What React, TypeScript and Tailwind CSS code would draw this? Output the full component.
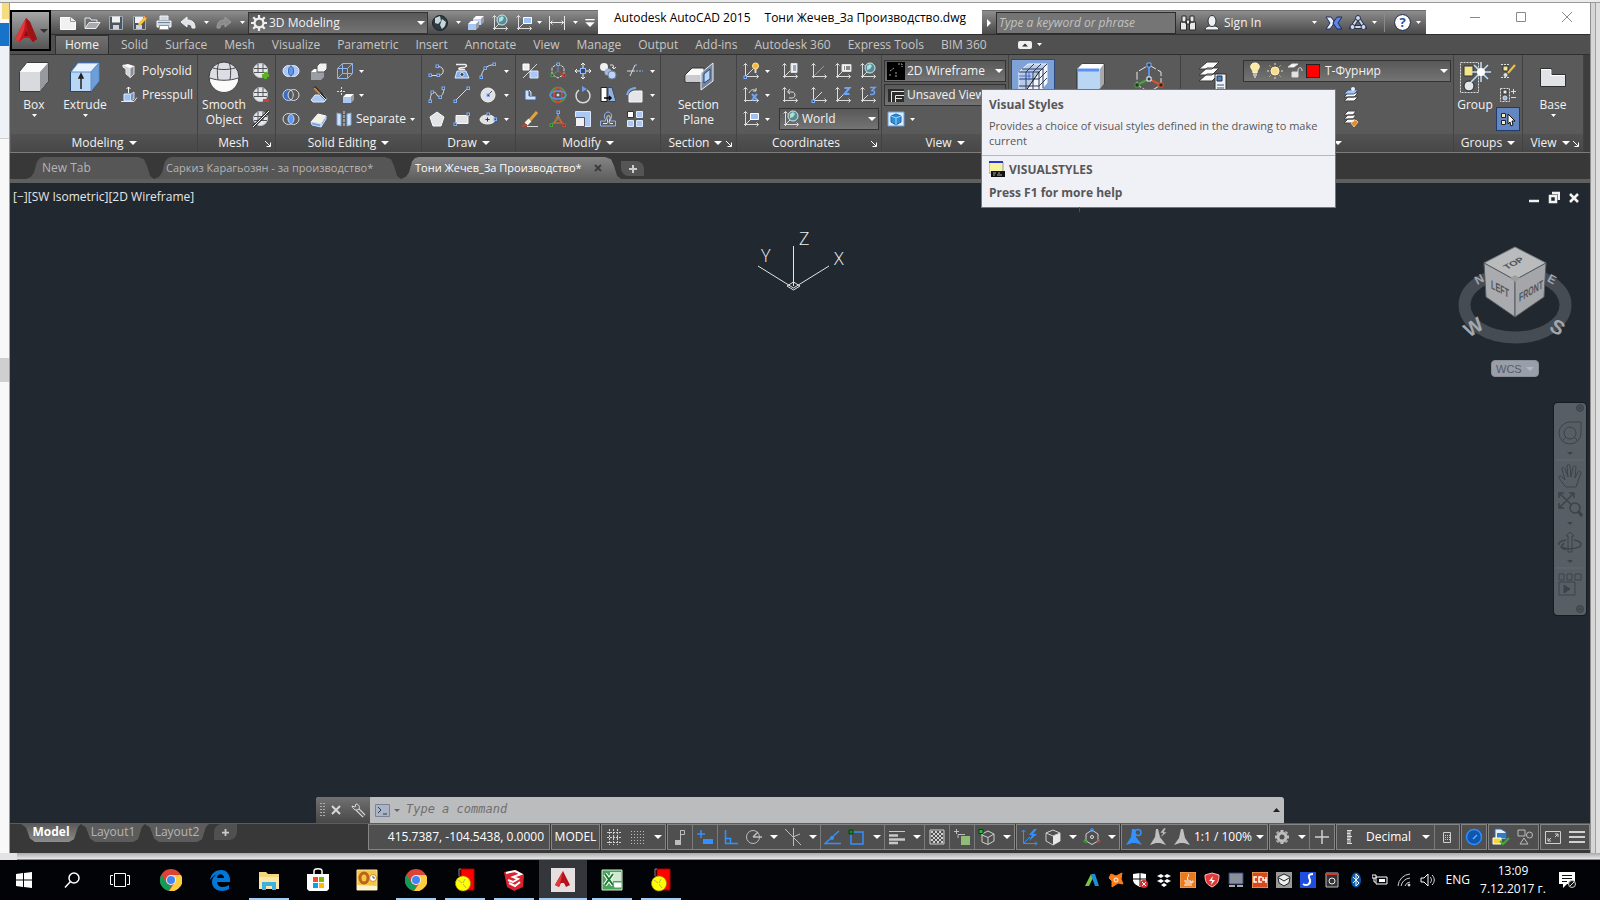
import type { ReactNode } from "react";
import clsx from "clsx";

/* ---------- drawing helpers ---------- */

function Svg({ s = 18, vb = 18, children }: { s?: number; vb?: number; children: ReactNode }) {
  return (
    <svg width={s} height={s} viewBox={`0 0 ${vb} ${vb}`} fill="none" stroke="#dcdcdc" className="shrink-0" aria-hidden="true">
      {children}
    </svg>
  );
}

function Caret({ big }: { big?: boolean }) {
  return big ? (
    <svg width="8" height="4" viewBox="0 0 8 4" className="shrink-0" aria-hidden="true">
      <path d="M0 0h8L4 4z" fill="#fff" />
    </svg>
  ) : (
    <svg width="5" height="3" viewBox="0 0 5 3" className="shrink-0" aria-hidden="true">
      <path d="M0 0h5L2.5 3z" fill="#fff" />
    </svg>
  );
}

function Axis({ children }: { children?: ReactNode }) {
  return (
    <Svg>
      <path d="M3.5 16V1.5M1.5 3.5l2-2 2 2M2 14.5h14.5M14.5 12.5l2 2-2 2" />
      {children}
    </Svg>
  );
}

const BLUE = "#8fb4ee";
const globe = (cx: number, cy: number, r: number) => (
  <>
    <circle cx={cx} cy={cy} r={r} fill="#4d8fa0" stroke="#d7e4ea" />
    <path d={`M${cx - 3} ${cy - 2}l3-2 2 2-2 3-3 1z`} fill="#b9dcc4" stroke="none" />
  </>
);
const meshSphere = (
  <>
    <circle cx="8.5" cy="8.5" r="7" fill="#e4e6ea" stroke="#c9cbd0" />
    <path d="M2 6.5h13M2 10.5h13M6 2v9M11 2v9" stroke="#55585f" />
  </>
);
const box = (x: number, y: number, w: number, front: string) => (
  <>
    <path d={`M${x} ${y + 3}l3-3h${w}l-3 3z`} fill="#fff" stroke="none" />
    <path d={`M${x} ${y + 3}h${w}v${w - 2}h-${w}z`} fill={front} stroke="none" />
    <path d={`M${x + w} ${y + 3}l3-3v${w - 2}l-3 3z`} fill="#9a9da3" stroke="none" />
  </>
);
const sq = (x: number, y: number, c = "#7fb0ff") => <rect x={x - 1} y={y - 1} width="2.5" height="2.5" stroke={c} fill="#3a4660" />;

const icons: Record<string, ReactNode> = {
  // quick access
  newFile: <Svg><path d="M1.5 3.5h10l5 4v8h-15z" fill="#f1f1f1" stroke="#fff" /><path d="M11.5 3.5v4h5" stroke="#999" /></Svg>,
  open: <Svg><path d="M2 14V4h5l1 2h6v2" stroke="#e8e8e8" /><path d="M2 14.5L6 8.5h11l-4 6z" fill="#a5a9b0" stroke="#eee" /></Svg>,
  save: <Svg><path d="M2.5 2.5h13v13h-13z" fill="#4c5661" stroke="#9fa9b3" /><path d="M5 2.5h8v6H5z" fill="#f0f0f0" stroke="none" /><path d="M6 11h6v4.5H6z" fill="#cdd3d8" stroke="none" /></Svg>,
  saveAs: <Svg><path d="M2.5 2.5h12v13h-12z" fill="#4c5661" stroke="#9fa9b3" /><path d="M4 3h8v6H4z" fill="#f0f0f0" stroke="none" /><path d="M5 11h6v4H5z" fill="#cdd3d8" stroke="none" /><path d="M8 11l7-8" stroke="#f5c33b" strokeWidth="3" /><path d="M14.5 3.5l1-1" stroke="#d9573c" strokeWidth="3" /></Svg>,
  print: <Svg><path d="M5 6V2h8v4M2 7h14v6H2z" fill="#cfd5dc" stroke="#f2f2f2" /><path d="M3 8.5h12" stroke="#6d86a8" /><path d="M4.5 11.5h9v4h-9z" fill="#fff" stroke="#8d96a0" /></Svg>,
  undo: <Svg><path d="M2 8l6-5v3c5 0 8 2 8 8h-3c0-3-2-4-5-4v3z" fill="#dfe3ea" stroke="#f2f2f2" /></Svg>,
  redo: <Svg><path d="M16 8l-6-5v3c-5 0-8 2-8 8h3c0-3 2-4 5-4v3z" fill="#8b8b8b" stroke="#9c9c9c" /></Svg>,
  gear: <Svg s={16}><circle cx="9" cy="9" r="5" strokeWidth="2.5" stroke="#f0f0f0" /><path d="M9 0v4M9 14v4M0 9h4M14 9h4M2.5 2.5l3 3M12.5 12.5l3 3M2.5 15.5l3-3M12.5 5.5l3-3" strokeWidth="2.5" stroke="#f0f0f0" /></Svg>,
  earth: <Svg><circle cx="9" cy="9" r="7.5" fill="#2d3b43" stroke="#1d2529" /><path d="M4 4l5-2 1 5-3 3-3-1zM11 5l4 3-1 4-3 3-2-4z" fill="#c9d6d9" stroke="none" /></Svg>,
  boxes: <Svg>{box(6, 2, 8, "#c3d8f8")}{box(1, 7, 8, "#a8c6f2")}</Svg>,
  axisGlobe: <Axis><path d="M4 14l4-4" />{globe(11, 6, 5)}</Axis>,
  axisView: <Axis><path d="M4 14l5-5" /><path d="M8.5 3.5h8v6h-8z" fill="#9fc0f4" stroke="#fff" /></Axis>,
  dim: <Svg><path d="M1.5 2v14M16.5 2v14M2 8.5h14M4.5 6.5l-2 2 2 2M13.5 6.5l2 2-2 2" stroke="#e8e8e8" /></Svg>,
  more: <Svg s={12}><path d="M2 4h14" stroke="#fff" strokeWidth="2" /><path d="M2 8h14l-7 7z" fill="#fff" stroke="none" /></Svg>,
  binoculars: <Svg><path d="M3 2h4v6H3zM11 2h4v6h-4zM1.5 8h6v8h-6zM10.5 8h6v8h-6zM7 6h4v4H7z" fill="#e8e8e8" stroke="#2b2b2b" /></Svg>,
  person: <Svg><path d="M2 16c0-3 3-4 5-4h4c2 0 5 1 5 4z" fill="#eef0f3" stroke="#2f3236" /><ellipse cx="9" cy="7" rx="4" ry="5.5" fill="#eef0f3" stroke="#2f3236" /></Svg>,
  exchange: <Svg><path d="M1 3h5l3 4-1 4-3 4H1l4-6z" fill="#e8eefb" stroke="#1d2c66" /><path d="M17 3h-5L8 9l4 6h5l-4-6z" fill="#5f86e6" stroke="#1d2c66" /></Svg>,
  a360: <Svg><path d="M9 4l6 9H3z" strokeWidth="4" stroke="#26314a" /><path d="M9 4l6 9H3z" strokeWidth="2" stroke="#cdd8ee" /><circle cx="9" cy="4" r="2.5" fill="#cdd8ee" stroke="#26314a" /><circle cx="3.5" cy="13" r="2.5" fill="#cdd8ee" stroke="#26314a" /><circle cx="14.5" cy="13" r="2.5" fill="#cdd8ee" stroke="#26314a" /></Svg>,

  // modeling
  box: <Svg s={32} vb={32}><path d="M1.5 10.5L9 1.5h21v19l-8 10H1.5z" fill="#d9dade" stroke="#3b3b3d" /><path d="M2 11L9 2h21l-8 9z" fill="#fbfbfc" stroke="none" /><path d="M22 11l8-9v18l-8 10z" fill="#97999e" stroke="none" /></Svg>,
  extrude: <Svg s={32} vb={32}><path d="M1.5 10.5L9 1.5h21v19l-8 10H1.5z" fill="#b9d7f5" stroke="#24446e" /><path d="M2 11L9 2h21l-8 9z" fill="#e6f2ff" stroke="#5c8fd0" /><path d="M22 11l8-9v18l-8 10z" fill="#6f9dd8" stroke="#5c8fd0" /><path d="M12 28V15M12 13l-2 4h4z" stroke="#222" strokeWidth="1.5" fill="#222" /></Svg>,
  polysolid: <Svg><path d="M3 3l7 3v9l-4-3V7L3 5z" fill="#cfd2d6" stroke="#ececec" /><path d="M10 6l4-2v8l-4 4z" fill="#8b8e94" stroke="#ddd" /><path d="M3 3l5-1 6 2-4 2z" fill="#fff" stroke="none" /></Svg>,
  presspull: <Svg><path d="M1 15.5h13l3-4" stroke="#e4e4e4" /><path d="M4 8h7v7H4z" fill="#9fc3f0" stroke="#dcebff" /><path d="M11 8l3-2v7l-3 2" fill="#6d93c8" /><path d="M8.5 7V1M6.5 3l2-2 2 2" stroke="#fff" /></Svg>,
  smooth: <Svg s={34} vb={34}><circle cx="17" cy="17" r="15" fill="#dcdee3" stroke="#3a3c40" /><path d="M3 18a14 14 0 0 0 28 0c-8 3-20 3-28 0z" fill="#fafafa" stroke="none" /><path d="M3 18c8 3 20 3 28 0M6 8c7 2 15 2 22 0M12 2c-2 5-2 12-1 18M22 2c2 5 2 12 1 18" stroke="#44474d" /></Svg>,
  meshAdd: <Svg>{meshSphere}<path d="M13.5 10v7M10 13.5h7" stroke="#5fae2e" strokeWidth="3" /></Svg>,
  meshSub: <Svg>{meshSphere}<path d="M11 14.5h6" stroke="#d0402b" strokeWidth="3" /></Svg>,
  meshOff: <Svg>{meshSphere}<path d="M1 17L17 1" stroke="#333" strokeWidth="3" /><path d="M1 17L17 1" stroke="#fff" /></Svg>,
  // solid editing
  union: <Svg><ellipse cx="6.5" cy="9" rx="5.5" ry="5.5" fill="#a9c6f7" stroke="#e3edff" /><ellipse cx="11.5" cy="9" rx="5.5" ry="5.5" fill="#a9c6f7" stroke="#e3edff" /><ellipse cx="9" cy="9" rx="2.5" ry="4.5" fill="#5f97ef" stroke="#3c66ab" /></Svg>,
  subtract: <Svg><ellipse cx="6.5" cy="9" rx="5.5" ry="5.5" fill="#3e6cb8" stroke="#bcd3ff" /><ellipse cx="11.5" cy="9" rx="5.5" ry="5.5" fill="#5a5a5a" /><path d="M9 4c3 3 3 7 0 10" /></Svg>,
  intersect: <Svg><ellipse cx="6.5" cy="9" rx="5.5" ry="5.5" /><ellipse cx="11.5" cy="9" rx="5.5" ry="5.5" /><ellipse cx="9" cy="9" rx="2.5" ry="4.5" fill="#5f97ef" stroke="#9cc1ff" /></Svg>,
  extrudeFace: <Svg>{box(1, 7, 10, "#9b9ea4")}<path d="M7 4l3-3h7v6l-3 3H7z" fill="#f2f2f2" stroke="#555" /></Svg>,
  slice: <Svg><path d="M1 14l4-5h9l3 3-3 4H3z" fill="#a9c8f3" stroke="#dce9ff" /><path d="M4 1l12 12" stroke="#2a2a2a" strokeWidth="3" /><path d="M4 2l6 6" stroke="#c98a3a" strokeWidth="2" /><path d="M10 8l6 6" stroke="#eee" /></Svg>,
  thicken: <Svg><path d="M1 12l7-8 8 2-5 8z" fill="#f3f0e4" stroke="#fff" /><path d="M1 12l10 2v3L2 15zM11 14l5-8v3l-5 8z" fill="#7aa5de" stroke="#c7dcff" /></Svg>,
  wireBox: <Svg><path d="M1.5 6.5h10v10h-10zM6.5 1.5h10v10h-10zM1.5 6.5l5-5M11.5 6.5l5-5M11.5 16.5l5-5M1.5 16.5l5-5" stroke={BLUE} /></Svg>,
  moveFace: <Svg><path d="M5.5 1v9M1 5.5h9" strokeDasharray="2 1" />{box(7, 8, 8, "#a9c8f3")}</Svg>,
  separate: <Svg><path d="M2 3l4 1v12l-4-1zM12 4l4-1v12l-4 1z" fill="#cfe2fb" stroke="#7fa6dd" /><path d="M9 1v16" strokeDasharray="3 1" /></Svg>,
  // draw
  polyline: <Svg><path d="M2 13.5h8c7 0 7-9 0-9" />{sq(2, 13)}{sq(10, 13)}{sq(9, 4)}</Svg>,
  helix: <Svg><path d="M3 2.5h9c3 1 1 3-2 3s-6 1-3 2h5" stroke="#eee" strokeWidth="1.5" /><path d="M4 9h9l3 7H2z" fill="#7eaaf0" stroke="#dce9ff" /><circle cx="9" cy="12.5" r="2" fill="#345" /></Svg>,
  arc: <Svg><path d="M2 16C3 8 7 3 16 2.5" />{sq(2, 15)}{sq(6, 6)}{sq(15, 2)}</Svg>,
  spline: <Svg><path d="M2 15C3 2 8 6 9 9s6 3 7-6" />{sq(2, 15)}{sq(4, 6)}{sq(12, 11)}{sq(15, 2)}</Svg>,
  line: <Svg><path d="M2 15L15 2" />{sq(2, 15)}{sq(15, 2)}</Svg>,
  circle: <Svg><circle cx="9" cy="9" r="7" fill="#dfe1e5" stroke="#f4f4f4" /><path d="M9 9l4-4" stroke="#456" />{sq(9, 9)}</Svg>,
  polygon: <Svg><path d="M9 2l7 5-3 9H5L2 7z" fill="#e2e3e6" stroke="#f8f8f8" /></Svg>,
  rect: <Svg><path d="M3 5.5h12v8H3z" fill="#e2e3e6" stroke="#f8f8f8" />{sq(2, 14)}{sq(15, 4)}</Svg>,
  ellipse: <Svg><ellipse cx="8.5" cy="9.5" rx="7.5" ry="4.5" fill="#dfe1e5" stroke="#f4f4f4" /><path d="M8.5 7.5v4M6.5 9.5h4" stroke="#333" />{sq(9, 4)}{sq(16, 9)}</Svg>,
  // modify
  alignBox: <Svg><path d="M2 2h6v6H2z" fill="#eee" stroke="#fff" /><path d="M2 16L16 2" /><path d="M9 9h8v7H9z" fill="#a9c8f3" stroke="#dce9ff" /></Svg>,
  rotate3d: <Svg><path d="M9 1.5l6 4v7l-6 3.5-6-3.5v-7z" strokeDasharray="3 1" /><path d="M9 1.5V9" stroke="#5d8fe8" /><path d="M9 9l-6 4" stroke="#49a33a" /><path d="M9 9l6 4" stroke="#d8402b" />{sq(9, 2)}{sq(3, 13, "#49a33a")}{sq(15, 13, "#d8402b")}</Svg>,
  move: <Svg><path d="M9 1v16M1 9h16M7 3l2-2 2 2M7 15l2 2 2-2M3 7L1 9l2 2M15 7l2 2-2 2" stroke="#f0f0f0" /><rect x="6.5" y="6.5" width="5" height="5" fill="#2e4a78" stroke="#8fb8ff" /></Svg>,
  copy: <Svg><circle cx="5" cy="5" r="4" fill="#f1f1f1" stroke="none" /><circle cx="9" cy="10" r="3.5" fill="#9fb8dc" stroke="none" /><circle cx="13" cy="13" r="4" fill="#bcd3f3" stroke="#6d83a8" /><path d="M11 3h3l1 4M13 5l2 2 2-2" /></Svg>,
  trim: <Svg><path d="M1 9h8M4 14L9 3" /><path d="M10 9h7M9 3h3" stroke={BLUE} strokeDasharray="2 1" /></Svg>,
  blocks: <Svg><path d="M4 4h4v6h7v4H4z" fill="#cfe0fa" stroke="#3c5c8f" /><path d="M8 4l2 2v4" fill="#8aa" /></Svg>,
  gizmoRing: <Svg><circle cx="9" cy="9" r="7.5" stroke="#4aa340" strokeWidth="1.5" /><ellipse cx="9" cy="9" rx="4" ry="7.5" stroke="#e0462e" strokeWidth="1.5" /><ellipse cx="9" cy="9" rx="8" ry="4" stroke="#5d93ee" strokeWidth="1.5" /><circle cx="9" cy="9" r="1" fill="#fff" /></Svg>,
  rotate: <Svg><path d="M5 4a7 7 0 1 0 8 0" strokeWidth="1.5" /><path d="M8 0l5 3-5 3z" fill="#6f9cec" stroke="none" /></Svg>,
  mirror: <Svg><path d="M2 1.5h6v14H2z" fill="#fff" stroke="#222" /><path d="M9 1.5h4l4 14H9z" fill="#8fb4dc" stroke="#446" /><path d="M5 12h7M10 10l2 2-2 2" stroke="#000" strokeWidth="1.5" /></Svg>,
  fillet: <Svg><path d="M3 16V10c0-3 3-5 6-5h7v11z" fill="#e4e5e8" stroke="#f6f6f6" /><path d="M1 9c1-5 4-7 9-7" stroke="#7fa9ee" strokeWidth="2" /></Svg>,
  erase: <Svg><path d="M9 10l7-8" stroke="#e6a33a" strokeWidth="3" /><path d="M5 14l4-4" stroke="#f8f2e0" strokeWidth="4" /><path d="M6 16.5h11" /><path d="M1 16l5-1" stroke="#d0402b" strokeWidth="2" /></Svg>,
  scale3d: <Svg><path d="M9 9V2" stroke="#5d93ee" strokeWidth="1.5" /><path d="M9 9l-7 6" stroke="#4aa340" strokeWidth="1.5" /><path d="M9 9l7 6" stroke="#e0462e" strokeWidth="1.5" /><path d="M9 5l4 8H5z" stroke="#d9732b" />{sq(9, 2)}{sq(2, 15, "#4aa340")}{sq(15, 15, "#e0462e")}</Svg>,
  scale: <Svg><path d="M1.5 1.5h15v15h-15z" fill="#a9c8f3" stroke="#dce9ff" /><path d="M1.5 7.5h9v9h-9z" fill="#f1f1f1" stroke="#556" /></Svg>,
  offset: <Svg><path d="M1.5 16v-5h5c1-1-2-3-1-6 1-4 6-4 7 0 1 3-2 5-1 6h5v5z" stroke={BLUE} /><path d="M4 13.5h4c2-2-1-5 0-7 1-1 2-1 3 0 1 2-2 5 0 7h3" stroke="#e8e8e8" /></Svg>,
  array: <Svg><path d="M10.5 1.5h6v6h-6zM1.5 10.5h6v6h-6zM10.5 10.5h6v6h-6z" fill="#a9c8f3" stroke="#dce9ff" /><path d="M1.5 1.5h6v6h-6z" fill="#fff" stroke="#333" /></Svg>,
  section: <Svg s={32} vb={32}><path d="M2 14l7-7h12v14H2z" fill="#fafafa" stroke="#2f3032" /><path d="M3 14h16v7H3z" fill="#c9cbd0" stroke="none" /><path d="M18 12L30 2v18L18 29z" fill="#7d8fae" fillOpacity=".8" stroke="#f0f0f0" /><path d="M21 13l6-5v10l-6 4z" fill="#b9d7f5" stroke="#2a4675" /></Svg>,
  // coordinates
  axisSun: <Axis><path d="M4 14l7-7" /><circle cx="13.5" cy="4" r="3" fill="#f7b733" stroke="#fde6a8" /><path d="M13.5 7v4" stroke="#ddd" strokeWidth="2" />{sq(3, 15)}</Axis>,
  axisX: <Axis><path d="M7 7c2-4 5-4 7-2M14 2v3h-3" /><path d="M10 8l5 6M15 8l-5 6" stroke="#6fa3f5" strokeWidth="2" /></Axis>,
  axisPage: <Axis><path d="M4 14l5-5" /><path d="M10 1.5h6v9h-6z" fill="#f2f2f2" /><path d="M12 4h3M12 6h3M12 8h3" stroke="#3a63a8" /></Axis>,
  axisLine: <Axis><path d="M4 14L14 4" stroke="#6c9be8" /></Axis>,
  axisList: <Axis><path d="M4 14l4-4" /><path d="M8 2.5h9v7H8z" fill="#f2f2f2" /><path d="M10 5h1M12 5h4M10 7h1M12 7h4" stroke="#222" /></Axis>,
  axisUndo: <Axis><path d="M8 12h3c4 0 4-6 0-6H7M9 3L6.5 6 9 8" /></Axis>,
  axisDot: <Axis><path d="M4 14l8-8" />{sq(3, 15)}</Axis>,
  axisZ: <Axis><path d="M4 14l5-5" /><path d="M10.5 2h5l-5 6h5" stroke="#6fa3f5" strokeWidth="2" /></Axis>,
  axis3: <Axis><path d="M4 14l5-5" /><path d="M11 1.5h5l-3 3c4 0 3 4 0 4h-2" stroke="#6fa3f5" strokeWidth="1.5" /></Axis>,
  wirePreview: <Svg><path d="M0 0h18v18H0z" fill="#000" stroke="none" /><path d="M3 9l4-3M11 2h4v3M3 14v-3M9 10v5" stroke="#aaa" strokeDasharray="2 1" /></Svg>,
  viewPreview: <Svg><path d="M1 3h16v13H1z" fill="#2c2c2c" stroke="none" /><path d="M4.5 16V5.5H17M8.5 16V9.5H17M9 12.5h6" stroke="#e8e8e8" /></Svg>,
  viewCube: <Svg><path d="M1 2h16v14H1z" fill="#d9ecff" stroke="#6fa0d8" /><path d="M4 6l5-2 5 2v6l-5 3-5-3z" fill="#2d8fd6" stroke="#1a63a8" /><path d="M4 6l5 2 5-2M9 8v7" stroke="#9fd2ff" /></Svg>,
  styles: <Svg s={32} vb={32}><path d="M2 10L11 2h19v19l-8 9H2z" fill="#dfe7f5" fillOpacity=".6" stroke="#f5f8ff" /><path d="M22 10L8 30h14zM22 10l8-8v19l-8 9z" fill="#f6f7fa" stroke="none" /><path d="M2 10h20v20M2 17h20M2 24h20M9 10v20M16 10v20M22 10l8-8M9 10l8-8M16 10l8-8M26 6v20M5 7h21M22 17l8-8M22 24l8-8" stroke="#2c3c5e" /><path d="M22 10L8 30" stroke="#111" /><path d="M2 14h12M12 10v8" stroke="#3c6cf0" /></Svg>,
  fullShape: <Svg s={32} vb={32}><path d="M2 7l5-5h22v20l-5 6H2z" fill="#b9d7f5" stroke="#2f3032" /><path d="M2 7l5-5h22l-4 5z" fill="#fff" stroke="none" /><path d="M25 7l4-5v20l-4 5z" fill="#a7a9ad" stroke="none" /><path d="M2 8h22" stroke="#5b8ff0" strokeWidth="3" /></Svg>,
  gizmo: <Svg s={32} vb={32}><path d="M16 3l12 7v13l-12 7-12-7V10z" stroke="#e6e6e6" strokeDasharray="8 2" /><path d="M16 3v14" stroke="#5b8fe0" strokeWidth="2" /><path d="M16 17L4 23" stroke="#4aa340" strokeWidth="2" /><path d="M16 17l12 6" stroke="#d8532b" strokeWidth="2" /><path d="M14 1h4v4h-4z" stroke="#7fb0ff" fill="#345" /><path d="M14 15h4v4h-4z" stroke="#fff" fill="#333" /><path d="M2 21h4v4H2z" stroke="#4aa340" fill="#232" /><path d="M26 21h4v4h-4z" stroke="#d8532b" fill="#322" /></Svg>,
  layers: <Svg s={32} vb={32}><path d="M2 20l8-7h12l-7 7zM2 14l8-7h12l-7 7zM2 8l8-7h12l-7 7z" fill="#fafafa" stroke="#3a3a3a" /><path d="M18 13h11v18H18z" fill="#eef2f8" stroke="#333" /><path d="M20 15h5v5h-5z" fill="#4c80c8" stroke="#234" /><path d="M20 24h7M20 27h7" stroke="#456" /></Svg>,
  bulb: <Svg><path d="M9 1c3 0 5 2 4 5-1 2-2 3-2 5H7c0-2-1-3-2-5-1-3 1-5 4-5z" fill="#fbe9a0" stroke="#fff6cc" /><path d="M7 13h4M8 15h2" stroke="#bbb" strokeWidth="2" /></Svg>,
  sun: <Svg><circle cx="9" cy="9" r="4" fill="#f8dc8a" stroke="#fff0c2" /><path d="M9 1v2M9 15v2M1 9h2M15 9h2M3.5 3.5l1 1M13.5 13.5l1 1M3.5 14.5l1-1M13.5 4.5l1-1" stroke="#f7e0a0" /></Svg>,
  lock: <Svg><path d="M2 5l4-3h6L8 5z" fill="#fff" /><path d="M6 10h6v5H6z" fill="#e4e4e4" /><path d="M12 10V8c0-3 4-3 4 0v1" /></Svg>,
  layerSm: <Svg><path d="M2 15l4-4h10l-4 4zM2 11l4-4h10l-4 4z" fill="#fafafa" stroke="#444" /><path d="M2 8l4-4h10l-4 4z" fill="#a9c8f3" stroke="#3a5a8f" /><circle cx="11" cy="3" r="2" fill="#e8f2ff" stroke="none" /></Svg>,
  layerMatch: <Svg><path d="M2 13l4-4h8l-3 4zM2 9l4-4h8l-3 4zM2 5l4-4h8l-3 4z" fill="#fafafa" stroke="#444" /><path d="M9 13l5-3 2 2-4 5z" fill="#e08a2e" stroke="#f8c07a" /></Svg>,
  // groups
  group: <Svg s={34} vb={34}><path d="M2.5 2.5h18v30h-18z" strokeDasharray="2 1" /><path d="M6 6h9v10H6z" fill="#f3e58a" stroke="#333" /><circle cx="11" cy="26" r="5" fill="#e3e6ea" stroke="#222" /><path d="M23 2v20M13 12h20M16 5l14 14M30 5L13 22" stroke="#bfe2ff" strokeWidth="1.5" /><circle cx="23" cy="12" r="4" fill="#fff" stroke="none" /></Svg>,
  groupEdit: <Svg><path d="M2 2.5h9M2 15.5h9" strokeDasharray="2 1" /><path d="M4 4h5v5H4z" fill="#f3e58a" stroke="#333" /><circle cx="6.5" cy="13" r="2" fill="#ddd" stroke="none" /><path d="M9 11l7-8" stroke="#eec04a" strokeWidth="2" /></Svg>,
  groupAdd: <Svg><path d="M1.5 2.5h9v13h-9z" strokeDasharray="2 1" /><path d="M4 4h4v4H4z" fill="#eee" stroke="#333" /><circle cx="6" cy="12" r="2" fill="#8fb4ee" /><path d="M12 5.5h5M14.5 3v5M12 11.5h5" /></Svg>,
  groupSel: <Svg><path d="M2.5 3.5h4v4h-4zM2.5 10.5h4v4h-4z" fill="#f3f0c0" stroke="#223" /><path d="M9 4l7 7h-3l1 4-2 1-1-4-2 2z" fill="#fff" stroke="#111" /></Svg>,
  base: <Svg s={32} vb={32}><path d="M3.5 7.5h11v6h14v12h-25z" fill="#e2e3e6" stroke="#2f3032" /><path d="M4 8.5h10v6h14" stroke="#fff" /></Svg>,

  // status bar
  gridLines: <Svg><path d="M4.5 1v16M8.5 1v16M12.5 1v16M2 4.5h14M2 9.5h14M2 14.5h14" stroke="#cfcfcf" strokeDasharray="2 1" /></Svg>,
  gridDots: <Svg><path d="M2 3.5h15M2 6.5h15M2 9.5h15M2 12.5h15M2 15.5h15" stroke="#bdbdbd" strokeDasharray="1 2" /></Svg>,
  infer: <Svg><path d="M9.5 14V2.5M9.5 6.5h4v-4h-4z" stroke="#bdbdbd" /><path d="M4 12h6v5H4z" fill="#bdbdbd" stroke="none" /></Svg>,
  dynamic: <Svg><path d="M5 2v8M1 6h8" stroke="#3391ff" strokeWidth="1.5" /><path d="M7 11h10v5H7z" fill="#3391ff" stroke="none" /></Svg>,
  ortho: <Svg><path d="M4.5 2v13.5H17M4.5 10.5h5v5" stroke="#3391ff" strokeWidth="1.5" /></Svg>,
  polar: <Svg><circle cx="8" cy="9" r="6.5" stroke="#bdbdbd" /><path d="M8 9h9M8 9l5-5" stroke="#bdbdbd" strokeWidth="1.5" /></Svg>,
  iso: <Svg><path d="M1 1l16 16M9.5 0v18M9 9l7-3" stroke="#bdbdbd" /></Svg>,
  track: <Svg><path d="M17 15.5H1L15 3" stroke="#3391ff" strokeWidth="1.5" /><circle cx="8" cy="10" r="2" fill="#3391ff" stroke="none" /></Svg>,
  osnap: <Svg><path d="M3 4h12v12H3z" stroke="#3391ff" strokeWidth="1.5" /><path d="M1 2h4v4H1z" fill="#1a8a1a" stroke="#0b3f0b" /></Svg>,
  lwt: <Svg><path d="M1 3.5h16" stroke="#c8c8c8" /><path d="M1 7.5h9M1 11.5h16M1 15h9" stroke="#c8c8c8" strokeWidth="2.5" /></Svg>,
  transp: <Svg><path d="M2 2h14v14H2z" stroke="#d0d0d0" /><path d="M3 4h12M3 8h12M3 12h12" stroke="#d0d0d0" strokeWidth="2" strokeDasharray="2 2" /><path d="M5 6h10M5 10h10M5 14h10" stroke="#d0d0d0" strokeWidth="2" strokeDasharray="2 2" /></Svg>,
  cycle: <Svg><path d="M3.5 1v5M1 3.5h5M5 10V6.5h7" stroke="#bdbdbd" /><path d="M8 8h9v9H8z" fill="#8fbd77" stroke="none" /></Svg>,
  osnap3d: <Svg><path d="M10 3l6 3v7l-6 3.5L4 14V6zM4 7l6 2.5L16 6M10 9.5V16" stroke="#cfcfcf" /><path d="M1 1.5h4v4H1z" fill="#22c43c" stroke="#0b3f0b" /></Svg>,
  ducs: <Svg><path d="M3.5 2v13.5H17M1.5 4l2-2 2 2M15 13.5l2 2-2 2M4 15l6-6" stroke="#3391ff" /><path d="M14 1L9 7h3l-3 6 8-7h-4l4-5z" fill="#3391ff" stroke="none" /></Svg>,
  filter: <Svg><path d="M9 2l7 3v8l-7 4-7-4V5z" stroke="#cfcfcf" /><path d="M9 8l7-3v8l-7 4z" fill="#e8e8e8" stroke="none" /><path d="M2 5l7 3 7-3" stroke="#cfcfcf" /></Svg>,
  gizmoSm: <Svg><path d="M9 2l6 4v7l-6 3.5L3 13V6z" stroke="#cfcfcf" /><circle cx="9" cy="9" r="1.5" /><circle cx="9" cy="2" r="1.5" stroke="#3391ff" /><circle cx="2.5" cy="13" r="1.5" stroke="#3fae35" /><circle cx="15.5" cy="13" r="1.5" stroke="#e03a2b" /></Svg>,
  anno1: <Svg><path d="M7 1h3l1 8 6 8-6-2H7l-6 2 5-8z" fill="#3391ff" stroke="none" /><circle cx="13" cy="4.5" r="3" stroke="#3391ff" strokeWidth="1.5" fill="#4f4f4f" /></Svg>,
  anno2: <Svg><path d="M7 1h2l2 8 6 8-6-2H7l-6 2 5-8z" fill="#c0c0c0" stroke="none" /><path d="M15 0l-4 5h3l-3 5 7-6h-3l2-4z" fill="#c0c0c0" stroke="#4f4f4f" strokeWidth=".5" /></Svg>,
  anno3: <Svg><path d="M8 1h2l2 9 5 7-6-2H7l-6 2 5-7z" fill="#c0c0c0" stroke="none" /></Svg>,
  cog: <Svg><circle cx="9" cy="9" r="4" strokeWidth="3" stroke="#bdbdbd" /><path d="M9 2v2M9 14v2M2 9h2M14 9h2M4 4l1 1M13 13l1 1M4 14l1-1M13 5l1-1" strokeWidth="3" stroke="#bdbdbd" /></Svg>,
  plus: <Svg><path d="M9 2v14M2 9h14" stroke="#cfcfcf" strokeWidth="1.5" /></Svg>,
  ruler: <Svg><path d="M7 2h4v14H7z" fill="#9a9a9a" stroke="none" /><path d="M7 2.5h5M7 5.5h3M7 8.5h5M7 11.5h3M7 15.5h5" stroke="#e0e0e0" /></Svg>,
  calc: <Svg><path d="M5.5 4.5h7v10h-7z" stroke="#cfcfcf" /><path d="M7 7.5h5M7 9.5h5M7 11.5h5" stroke="#cfcfcf" strokeDasharray="1 1" /></Svg>,
  perf: <Svg><circle cx="9" cy="9" r="7.5" fill="#0e56b0" stroke="#2f8dff" strokeWidth="1.5" /><path d="M8 11l4-4" stroke="#5fb0ff" strokeWidth="1.5" /></Svg>,
  files: <Svg><path d="M3 1h6l5 3v7H3z" fill="#e6eef7" stroke="#2f6fae" /><path d="M5 5h9v5H5z" fill="#2f7cc4" stroke="none" /><path d="M1 10h8v6H1z" fill="#f4d936" stroke="#fff" /><path d="M8 13l3 3 6-6" stroke="#3fae2e" strokeWidth="2" /></Svg>,
  isolate: <Svg><path d="M2 2h7v6H2zM4 16l4-6 4 6z" stroke="#bdbdbd" /><circle cx="13.5" cy="7" r="3" stroke="#bdbdbd" /></Svg>,
  clean: <Svg><path d="M1.5 3.5h15v12h-15z" stroke="#d0d0d0" /><path d="M4 13l3-3M4 10v3h3M14 6l-3 3M11 6h3v3" stroke="#d0d0d0" /></Svg>,
  menu: <Svg><path d="M1 4h16M1 9h16M1 14h16" stroke="#d0d0d0" strokeWidth="2" /></Svg>,
};

function Btn({ icon, label, className }: { icon: string; label: string; className?: string }) {
  return (
    <button type="button" aria-label={label} className={clsx("flex h-6 shrink-0 items-center justify-center", className ?? "w-6")}>
      {icons[icon]}
    </button>
  );
}

function Drop({ label, big, className }: { label: string; big?: boolean; className?: string }) {
  return (
    <button type="button" aria-label={label} className={clsx("flex h-6 shrink-0 items-center justify-center", className ?? "w-3")}>
      <Caret big={big} />
    </button>
  );
}

function Combo({ icon, label, value, className }: { icon: ReactNode; label: string; value: string; className?: string }) {
  return (
    <label className={clsx("flex h-[22px] shrink-0 items-center gap-[2px] border border-[#333] bg-linear-to-b from-[#585858] to-[#747474] pr-[2px] pl-[2px] text-[#f2f2f2]", className)}>
      {icon}
      <select aria-label={label} className="min-w-0 flex-1 appearance-none bg-transparent outline-none">
        <option>{value}</option>
      </select>
      <Caret big />
    </label>
  );
}

function BigBtn({ icon, lines, drop, className }: { icon: string; lines: string[]; drop?: boolean; className?: string }) {
  return (
    <button type="button" className={clsx("flex shrink-0 flex-col items-center leading-[15px]", className ?? "w-[50px]")}>
      <span className="mb-[2px] flex h-[36px] items-center">{icons[icon]}</span>
      {lines.map((l) => (
        <span key={l}>{l}</span>
      ))}
      {drop && <span className="mt-[2px]"><Caret /></span>}
    </button>
  );
}

type PanelProps = { title?: string; drop?: boolean; launch?: boolean; className: string; bodyClass?: string; children: ReactNode };

function Panel({ title, drop, launch, className, bodyClass, children }: PanelProps) {
  return (
    <section className={clsx("relative flex shrink-0 flex-col border-r border-[#424242]", className)}>
      <div className={clsx("flex h-[79px] pt-1", bodyClass)}>{children}</div>
      <div className="flex h-[18px] items-center bg-linear-to-b from-[#525252] to-[#474747] px-1">
        {title && (
          <button type="button" className="flex flex-1 items-center justify-center gap-[5px]">
            {title}
            {drop && <Caret big />}
          </button>
        )}
        {launch && (
          <button type="button" aria-label={`${title} settings`} className="pt-[2px]">
            <Svg s={6} vb={6}>
              <path d="M0 0l5 5M5.5 1.5v4h-4" stroke="#fff" />
            </Svg>
          </button>
        )}
      </div>
    </section>
  );
}

function IconGrid({ cols, rows }: { cols: string; rows: string[] }) {
  return (
    <div className={clsx("grid auto-rows-[24px] content-start", cols)}>
      {rows.map((r, i) =>
        r === "v" ? <Drop key={i} label="More" className="w-full" /> : <Btn key={i} icon={r} label={r} className="w-full" />
      )}
    </div>
  );
}

/* ---------- window header ---------- */

const menuTabs = ["Solid", "Surface", "Mesh", "Visualize", "Parametric", "Insert", "Annotate", "View", "Manage", "Output", "Add-ins", "Autodesk 360", "Express Tools", "BIM 360"];

function Header() {
  return (
    <header className="flex bg-[#505050]">
      <button type="button" aria-label="Application menu" className="flex h-[41px] w-[41px] shrink-0 items-center border-2 border-black bg-linear-to-b from-[#a6a6a6] to-[#555] pl-[2px]">
        <svg width="24" height="28" viewBox="0 0 24 28" aria-hidden="true">
          <path d="M12 1L1 22l4 3 5-4h5l4 4 4-3L16 5z" fill="#c4161c" />
          <path d="M12 1l-2 12-5 12-4-3z" fill="#e0393b" />
          <path d="M12 13l-2 6h5z" fill="#8a1013" />
          <path d="M12 1l4 4 7 17-4 3-5-9z" fill="#9c1216" />
        </svg>
        <svg width="8" height="4" viewBox="0 0 8 4" className="ml-[2px]" aria-hidden="true">
          <path d="M0 0h8L4 4z" fill="#333" />
        </svg>
      </button>
      <div className="flex min-w-0 flex-1 flex-col">
        <div className="flex h-6 bg-white">
          <div className="flex w-[547px] shrink-0 items-center border-t border-[#6d6d6d] bg-linear-to-b from-[#8d8d8d] to-[#4a4a4a] pl-[5px]">
            <Btn icon="newFile" label="New" />
            <Btn icon="open" label="Open" />
            <Btn icon="save" label="Save" />
            <Btn icon="saveAs" label="Save As" />
            <Btn icon="print" label="Plot" />
            <Btn icon="undo" label="Undo" />
            <Drop label="Undo list" />
            <Btn icon="redo" label="Redo" />
            <Drop label="Redo list" />
            <Combo icon={icons.gear} label="Workspace" value="3D Modeling" className="w-[180px]" />
            <Btn icon="earth" label="Location" />
            <Drop label="Location list" />
            <Btn icon="boxes" label="Solids" />
            <Btn icon="axisGlobe" label="World UCS" />
            <Btn icon="axisView" label="View UCS" />
            <Drop label="UCS list" className="w-[6px]" />
            <Btn icon="dim" label="Dimension" className="w-[30px]" />
            <Drop label="Dimension list" className="w-[6px]" />
            <Btn icon="more" label="Customize" />
          </div>
          <h1 className="flex flex-1 items-center justify-center gap-[14px] pb-[9px] whitespace-nowrap text-black">
            <span>Autodesk AutoCAD 2015</span>
            <span>Тони Жечев_За Производство.dwg</span>
          </h1>
          <div className="flex w-[444px] shrink-0 items-center border-t border-[#6d6d6d] bg-linear-to-b from-[#8d8d8d] to-[#4a4a4a]">
            <button type="button" aria-label="Collapse search" className="flex h-full w-[14px] items-center justify-center">
              <svg width="4" height="8" viewBox="0 0 4 8" aria-hidden="true"><path d="M0 0l4 4-4 4z" fill="#fff" /></svg>
            </button>
            <input aria-label="Search help" placeholder="Type a keyword or phrase" className="h-[22px] w-[180px] border border-[#2b2b2b] bg-[#757575] px-[2px] italic placeholder:text-[#c2c2c2]" />
            <Btn icon="binoculars" label="Search" />
            <Btn icon="person" label="Account" />
            <button type="button" className="flex-1 text-left text-[#f2f2f2]">Sign In</button>
            <Drop label="Sign in list" />
            <Btn icon="exchange" label="Exchange apps" className="w-7" />
            <Btn icon="a360" label="Autodesk 360" className="w-5" />
            <Drop label="Autodesk 360 list" />
            <span className="ml-1 h-[18px] w-px bg-[#8a8a8a]" />
            <button type="button" aria-label="Help" className="ml-[10px] flex size-[15px] items-center justify-center rounded-full bg-white text-[13px] leading-none font-bold text-[#2a4fae] outline outline-[#2d3a55]">?</button>
            <Drop label="Help list" className="w-4" />
          </div>
          <div className="flex w-[164px] shrink-0 items-start justify-end pr-[17px]">
            {[
              ["Minimize", "M1 7.5h10"],
              ["Maximize", "M1.5 2.5h9v9h-9z"],
              ["Close", "M1 2l10 10M11 2L1 12"],
            ].map(([label, d]) => (
              <button key={label} type="button" aria-label={label} className="ml-[34px]">
                <svg width="12" height="13" viewBox="0 0 12 13" fill="none" stroke="#8a8a8a" aria-hidden="true"><path d={d} /></svg>
              </button>
            ))}
          </div>
        </div>
        <nav className="flex h-5 items-stretch gap-px border-t border-[#2e2e2e] pl-1 text-[#c6c6c6]">
          <a href="#home" className="mr-[3px] flex items-center border-x border-t border-[#303030] bg-linear-to-b from-[#707070] to-[#5b5b5b] px-[9px] text-[#f2f2f2]">Home</a>
          {menuTabs.map((t) => (
            <a key={t} href={`#${t}`} className="flex items-center px-2 whitespace-nowrap">{t}</a>
          ))}
          <button type="button" aria-label="Ribbon display" className="ml-[22px] flex items-center gap-[5px]">
            <svg width="14" height="8" viewBox="0 0 14 8" aria-hidden="true">
              <rect width="14" height="8" rx="2" fill="#efefef" /><path d="M4 5.5h6L7 2.5z" fill="#333" />
            </svg>
            <Caret />
          </button>
        </nav>
      </div>
    </header>
  );
}

/* ---------- ribbon ---------- */

function Tooltip() {
  return (
    <div role="tooltip" className="absolute top-[34px] left-[-28px] z-20 w-[355px] border border-[#767676] bg-[#f0f1f7] py-[7px] leading-[15px] text-[#575757] after:absolute after:top-full after:left-[97px] after:h-[5px] after:w-px after:bg-[#3d3dd0]">
      <p className="px-[7px] font-bold">Visual Styles</p>
      <p className="mt-[6px] px-[7px] text-[11px]">Provides a choice of visual styles defined in the drawing to make current</p>
      <div className="mt-[7px] flex items-center gap-1 border-t border-[#b8b8b8] px-[7px] pt-[5px] font-bold">
        <svg width="16" height="16" viewBox="0 0 16 16" aria-hidden="true">
          <path d="M0 1h14v11H0z" fill="#f6f3a0" stroke="#999" /><path d="M0 0h14v2H0z" fill="#2438c8" />
          <path d="M2 10h14v6H2z" fill="#111" /><path d="M4 12h3M9 12h2M4 14h2M8 14h5" stroke="#aaa" />
        </svg>
        VISUALSTYLES
      </div>
      <p className="mt-2 px-[7px] font-bold">Press F1 for more help</p>
    </div>
  );
}

function Ribbon() {
  return (
    <div className="flex border-t border-b border-t-[#303030] border-b-[#7c7c7c] bg-[#5a5a5a] pl-px text-[#f2f2f2]">
      <Panel title="Modeling" drop className="w-[187px]">
        <BigBtn icon="box" lines={["Box"]} drop className="w-[46px]" />
        <BigBtn icon="extrude" lines={["Extrude"]} drop className="w-[56px]" />
        <div className="ml-[7px]">
          <button type="button" className="flex h-6 items-center gap-1">{icons.polysolid}Polysolid</button>
          <button type="button" className="flex h-6 items-center gap-1">{icons.presspull}Presspull</button>
        </div>
      </Panel>
      <Panel title="Mesh" launch className="w-[78px]">
        <BigBtn icon="smooth" lines={["Smooth", "Object"]} className="w-[52px]" />
        <IconGrid cols="grid-cols-[22px]" rows={["meshAdd", "meshSub", "meshOff"]} />
      </Panel>
      <Panel title="Solid Editing" drop className="w-[146px]" bodyClass="pl-px">
        <div>
          <IconGrid cols="grid-cols-[28px_28px_24px_8px]" rows={["union", "extrudeFace", "wireBox", "v", "subtract", "slice", "moveFace", "v"]} />
          <div className="flex h-6 items-center">
            <Btn icon="intersect" label="Intersect" className="w-7" />
            <Btn icon="thicken" label="Thicken" className="w-7" />
            <button type="button" className="flex items-center gap-[3px] pl-[2px]">{icons.separate}Separate</button>
            <Drop label="Separate list" className="w-[14px]" />
          </div>
        </div>
      </Panel>
      <Panel title="Draw" drop className="w-[94px]" bodyClass="pl-[2px]">
        <IconGrid cols="grid-cols-[26px_24px_28px_8px]" rows={["polyline", "helix", "arc", "v", "spline", "line", "circle", "v", "polygon", "rect", "ellipse", "v"]} />
      </Panel>
      <Panel title="Modify" drop className="w-[145px]">
        <IconGrid
          cols="grid-cols-[28px_28px_22px_28px_26px_8px]"
          rows={["alignBox", "rotate3d", "move", "copy", "trim", "v", "blocks", "gizmoRing", "rotate", "mirror", "fillet", "v", "erase", "scale3d", "scale", "offset", "array", "v"]}
        />
      </Panel>
      <Panel title="Section" drop launch className="w-[76px]" bodyClass="justify-center">
        <BigBtn icon="section" lines={["Section", "Plane"]} />
      </Panel>
      <Panel title="Coordinates" launch className="w-[145px]" bodyClass="pl-[2px]">
        <div>
          <IconGrid cols="grid-cols-[24px_8px_38px_20px_28px_22px]" rows={["axisSun", "v", "axisPage", "axisLine", "axisList", "axisGlobe", "axisX", "v", "axisUndo", "axisDot", "axisZ", "axis3"]} />
          <div className="flex h-6 items-center">
            <Btn icon="axisView" label="UCS view" />
            <Drop label="UCS view list" className="w-2" />
            <Combo icon={icons.axisGlobe} label="UCS" value="World" className="ml-2 w-[100px]" />
          </div>
        </div>
      </Panel>
      <Panel title="View" drop className="w-[127px]" bodyClass="px-[2px]">
        <div className="w-full">
          <div className="flex h-6 items-center"><Combo icon={icons.wirePreview} label="Visual style" value="2D Wireframe" className="w-full" /></div>
          <div className="flex h-6 items-center"><Combo icon={icons.viewPreview} label="Named view" value="Unsaved View" className="w-full" /></div>
          <div className="flex h-6 items-center">
            <Btn icon="viewCube" label="Viewport" />
            <Drop label="Viewport list" className="w-2" />
          </div>
        </div>
      </Panel>
      <Panel className="w-[172px]" bodyClass="gap-[14px] pl-[2px]">
        <button type="button" aria-label="Visual Styles" className="flex h-[70px] w-[44px] justify-center border border-[#2d4a80] bg-[#7ea1d6] pt-[2px]">{icons.styles}</button>
        <button type="button" aria-label="Culling" className="flex w-[44px] justify-center pt-[3px]">{icons.fullShape}</button>
        <button type="button" aria-label="Move Gizmo" className="flex w-[44px] justify-center pt-[3px]">{icons.gizmo}</button>
        <Tooltip />
      </Panel>
      {/* the tooltip covers this panel's title, only its arrow shows */}
      <section className="flex min-w-[273px] flex-1 flex-col border-r border-[#424242]">
        <div className="flex h-[79px] pt-1 pl-[14px]">
          <button type="button" aria-label="Layer properties" className="flex w-[36px] justify-center pt-[2px]">{icons.layers}</button>
          <div className="ml-3 flex-1 pr-[2px]">
            <div className="flex h-6 items-center">
              <Combo
                icon={
                  <>
                    {icons.bulb}{icons.sun}{icons.lock}
                    <span className="mr-[3px] size-[14px] shrink-0 border border-[#222] bg-[#f00]" />
                  </>
                }
                label="Layer"
                value="Т-Фурнир"
                className="w-full"
              />
            </div>
            <div className="pl-[96px]">
              <Btn icon="layerSm" label="Layer walk" />
              <Btn icon="layerMatch" label="Match layer" />
            </div>
          </div>
        </div>
        <button type="button" aria-label="Layers" className="flex h-[18px] items-center bg-linear-to-b from-[#525252] to-[#474747] pl-[153px]">
          <Caret big />
        </button>
      </section>
      <Panel title="Groups" drop className="w-[69px]">
        <BigBtn icon="group" lines={["Group"]} className="w-[42px]" />
        <div>
          <Btn icon="groupEdit" label="Group edit" />
          <Btn icon="groupAdd" label="Add or remove" />
          <Btn icon="groupSel" label="Group selection" className="w-6 border border-[#1f3b70] bg-[#6487c2]" />
        </div>
      </Panel>
      <Panel title="View" drop launch className="w-[61px]" bodyClass="justify-center">
        <BigBtn icon="base" lines={["Base"]} drop />
      </Panel>
      <div className="w-[6px] shrink-0 bg-[#3d3d3d]" />
    </div>
  );
}

/* ---------- drawing tabs ---------- */

const tabClip = "[clip-path:polygon(0_100%,5px_90%,8px_70%,11px_20%,14px_4%,18px_0,calc(100%-16px)_0,calc(100%-10px)_10%,calc(100%-7px)_40%,calc(100%-4px)_85%,100%_100%)]";

function FileTabs() {
  return (
    <div className="border-b-4 border-[#5f5f5f] bg-[#383838] pt-1 pl-4">
      <div className="flex h-[22px] text-[11px] text-[#b5b5b5]">
        <button type="button" className={clsx("w-[128px] bg-[#565656] pl-4 text-left text-[12px]", tabClip)}>New Tab</button>
        <button type="button" className={clsx("w-[247px] bg-[#565656] pl-[12px] text-left whitespace-nowrap", tabClip)}>Саркиз Карагьозян - за производство*</button>
        <div className={clsx("flex w-[220px] items-center bg-linear-to-b from-[#858585] to-[#606060] pl-[14px] whitespace-nowrap text-white", tabClip)}>
          <button type="button">Тони Жечев_За Производство*</button>
          <button type="button" aria-label="Close tab" className="ml-3">
            <Svg s={8} vb={8}><path d="M1 1l6 6M7 1L1 7" stroke="#3c3c3c" strokeWidth="2" /></Svg>
          </button>
        </div>
        <button type="button" aria-label="New drawing" className="mt-[4px] flex h-[15px] w-[23px] items-center justify-center rounded-tr-lg rounded-bl-lg bg-[#555]">
          <Svg s={8} vb={8}><path d="M4 0v8M0 4h8" stroke="#ccc" strokeWidth="2" /></Svg>
        </button>
      </div>
    </div>
  );
}

/* ---------- viewport ---------- */

function ViewCube() {
  const face = { stroke: "none", fill: "#50555c", fontWeight: 700, fontSize: 12, textAnchor: "middle" as const };
  const compass = { stroke: "none", fill: "#a3a7ab", fontWeight: 700, textAnchor: "middle" as const };
  return (
    <svg width="120" height="104" viewBox="0 0 120 104" className="absolute top-[60px] right-[15px] font-['Liberation_Sans',sans-serif]" aria-label="View cube">
      <ellipse cx="60" cy="62" rx="50.5" ry="32.5" fill="none" stroke="#454c54" strokeWidth="12" />
      <text {...compass} fontSize="12" transform="translate(26 40) rotate(-28)">N</text>
      <text {...compass} fontSize="12" transform="translate(95 40) rotate(28)">E</text>
      <text {...compass} fontSize="20" transform="translate(22 90) rotate(-32)">W</text>
      <text {...compass} fontSize="20" transform="translate(99 90) rotate(32)">S</text>
      <path d="M60 4l31 16-31 17-31-17z" fill="#b9bbbd" stroke="#777b80" />
      <path d="M29 20l31 17v37L31 54z" fill="#a9abae" stroke="#555a60" />
      <path d="M91 20L60 37v37l29-20z" fill="#a4a6a9" stroke="#555a60" />
      <path d="M60 32l5 3-5 4-5-4z" fill="#97a09c" />
      <text {...face} fontSize="11" transform="matrix(.8 -.42 .6 .5 61 22)">TOP</text>
      <text {...face} transform="matrix(.6 .32 0 1 45 50)">LEFT</text>
      <text {...face} transform="matrix(.58 -.34 0 1 76 52)">FRONT</text>
    </svg>
  );
}

function NavBar() {
  return (
    <div className="absolute top-[220px] right-1 flex w-8 flex-col rounded-[3px] bg-[#585f64] outline outline-[#171c22]">
      <svg width="32" height="212" viewBox="0 0 32 212" fill="none" stroke="#3d4348" aria-label="Navigation bar">
        <circle cx="26" cy="5" r="3.5" fill="#4a5055" /><path d="M24.5 3.5l3 3M27.5 3.5l-3 3" />
        <path d="M16 19h11v11a11 11 0 1 1-11-11z" /><circle cx="16" cy="30" r="6" /><path d="M8 38l4-4M24 38l-4-4" />
        <path d="M13 49h6l-3 3zM13 119h6l-3 3zM13 157h6l-3 3z" fill="#3d4348" stroke="none" />
        <path d="M1 57h30M1 165h30" stroke="#62696e" />
        <path d="M10 82l-5-7c-1-2 1-3 3-1l3 3-3-11c0-2 2-2 3 0l3 8-1-11c0-2 3-2 3 0l1 11 2-10c1-2 3-1 3 0l-1 11 3-6c1-2 3-1 3 1l-5 14H12z" />
        <path d="M5 90l16 15M20 90L5 105M5 95v-5h5M15 90h5v5M5 100v5h5" strokeWidth="1.5" /><circle cx="21" cy="105" r="5" strokeWidth="1.5" fill="#585f64" /><path d="M24 108l4 5" strokeWidth="3" />
        <path d="M16 129l-4 4h2v16h4v-16h2z" /><path d="M12 137c-6 1-8 3-7 5M20 137c5 1 8 3 7 5-2 4-14 5-20 2M10 140l-3 4 4 3" strokeWidth="1.5" />
        <path d="M5 171h5v6H5zM13 171h5v6h-5zM21 171h6v6h-6zM5 179h16v13H5z" /><path d="M10 182l6 4-6 4z" fill="#3d4348" />
        <circle cx="26" cy="206" r="3.5" fill="#4a5055" /><path d="M24 206h4" />
      </svg>
    </div>
  );
}

function Viewport() {
  return (
    <main className="relative flex flex-1 flex-col bg-[#212830]">
      <div className="flex items-center justify-between pt-[6px] pr-[10px] pl-[3px] leading-[16px] text-[#e6e6e6]">
        <span>[−][SW Isometric][2D Wireframe]</span>
        <span className="flex gap-2">
          {[
            ["Minimize drawing", "M1 10h10"],
            ["Restore drawing", "M2 5h6v6H2zM4 2h7v7"],
            ["Close drawing", "M2 3l8 8M10 3l-8 8"],
          ].map(([label, d]) => (
            <button key={label} type="button" aria-label={label}>
              <svg width="12" height="13" viewBox="0 0 12 13" fill="none" stroke="#f2f2f2" strokeWidth="2.5" aria-hidden="true"><path d={d} /></svg>
            </button>
          ))}
        </span>
      </div>
      <svg width="100" height="70" viewBox="0 0 100 70" className="absolute top-[43px] left-1/2 -ml-[52px] font-['Open_Sans',sans-serif]" fill="none" stroke="#e4e4e4" aria-label="UCS icon">
        <path d="M45.5 20v40M10 40l35.5 22L81 40M39 60l6.5-4 6.5 4-6.5 4z" />
        <g stroke="none" fill="#f0f0f0" fontSize="18" fontWeight="300">
          <text x="13" y="36">Y</text>
          <text x="51" y="19">Z</text>
          <text x="86" y="39">X</text>
        </g>
      </svg>
      <ViewCube />
      <button type="button" className="absolute top-[177px] right-[51px] flex h-[17px] w-12 items-center justify-between rounded-[4px] border border-[#8a8e9a] bg-[#9a9ea9] px-1 font-['Liberation_Sans',sans-serif] text-[11px] text-[#565b66]">
        WCS
        <svg width="8" height="4" viewBox="0 0 8 4" aria-hidden="true"><path d="M0 0h8L4 4z" fill="#b4b8c1" /></svg>
      </button>
      <NavBar />
      {/* command line */}
      <form className="mx-[306px] mt-auto flex h-[26px] rounded-t-[3px] bg-[#bbbcbe]">
        <div className="flex w-[54px] shrink-0 items-center rounded-tl-[3px] bg-linear-to-b from-[#717171] to-[#484848] pl-1">
          <Svg s={16} vb={16}><path d="M1 1v15M4 1v15" stroke="#aaa" strokeWidth="2" strokeDasharray="1 2" /></Svg>
          <button type="button" aria-label="Close command line" className="-ml-[5px]"><Svg s={10} vb={10}><path d="M1 1l8 8M9 1L1 9" stroke="#d8d8d8" strokeWidth="2" /></Svg></button>
          <button type="button" aria-label="Customize" className="ml-[9px]"><Svg s={16} vb={16}><path d="M7 7l7 7" strokeWidth="4" stroke="#ddd" /><path d="M7 7l7 7" strokeWidth="2" stroke="#666" /><path d="M2 4l3 1 1-3c3 0 4 3 3 5-2 2-6 1-7-3z" stroke="#ddd" fill="#666" /></Svg></button>
        </div>
        <span className="ml-[5px] flex items-center gap-1">
          <Svg s={15} vb={15}><path d="M.5 1.5h14v12H.5z" fill="#aab4c4" stroke="#788396" /><path d="M3 4l3 3-3 3M8 11h4" stroke="#2d3a52" /></Svg>
          <svg width="6" height="3" viewBox="0 0 6 3" aria-hidden="true"><path d="M0 0h6L3 3z" fill="#666" /></svg>
        </span>
        <input aria-label="Command" placeholder="Type a command" className="ml-[6px] min-w-0 flex-1 pb-[2px] font-['DejaVu_Sans_Mono',monospace] text-[12px] italic outline-none placeholder:text-[#6f6f6f]" />
        <button type="button" aria-label="Command history" className="pr-1">
          <svg width="7" height="4" viewBox="0 0 7 4" aria-hidden="true"><path d="M0 4h7L3.5 0z" fill="#222" /></svg>
        </button>
      </form>
    </main>
  );
}

/* ---------- status bar ---------- */

const layoutClip = "[clip-path:polygon(0_0,5px_20%,9px_80%,14px_100%,calc(100%-12px)_100%,calc(100%-7px)_85%,calc(100%-3px)_15%,100%_0)]";

function Cell({ icon, drop, div }: { icon: string; drop?: boolean; div?: boolean }) {
  return (
    <span className={clsx("flex h-full shrink-0 items-center", div && "border-r border-[#7b7b7b]")}>
      <Btn icon={icon} label={icon} />
      {drop && <Drop label={`${icon} list`} big className="w-[15px]" />}
    </span>
  );
}

function Group({ className, children }: { className?: string; children: ReactNode }) {
  return <div className={clsx("flex h-[26px] shrink-0 items-center border border-[#858585] bg-[#4f4f4f]", className)}>{children}</div>;
}

function StatusBar() {
  return (
    <footer className="flex h-[30px] shrink-0 items-start gap-px border-t border-[#5c5c5c] bg-[#383838] text-white">
      <div className="flex flex-1 pl-[11px] text-[#b5b5b5]">
        <button type="button" className={clsx("h-[18px] w-[60px] bg-linear-to-b from-[#5a5a5a] to-[#8c8c8c] pb-[2px] font-bold text-white", layoutClip)}>Model</button>
        <button type="button" className={clsx("h-[18px] w-[64px] bg-[#5c5c5c] pb-[2px]", layoutClip)}>Layout1</button>
        <button type="button" className={clsx("h-[18px] w-[64px] bg-[#5c5c5c] pb-[2px]", layoutClip)}>Layout2</button>
        <button type="button" aria-label="New layout" className="ml-[5px] flex h-[16px] w-[23px] items-center justify-center rounded-tl-lg rounded-br-lg bg-[#505050]">
          <Svg s={7} vb={8}><path d="M4 0v8M0 4h8" stroke="#ccc" strokeWidth="2" /></Svg>
        </button>
      </div>
      <Group className="w-[182px] justify-end pr-[5px]">415.7387, -104.5438, 0.0000</Group>
      <Group className="w-[49px] justify-center"><button type="button">MODEL</button></Group>
      <Group className="w-[65px]"><Cell icon="gridLines" /><Cell icon="gridDots" drop /></Group>
      <Group>
        <Cell icon="infer" div />
        <Cell icon="dynamic" div />
        <Cell icon="ortho" />
        <Cell icon="polar" drop />
        <Cell icon="iso" drop div />
        <Cell icon="track" />
        <Cell icon="osnap" drop div />
        <Cell icon="lwt" drop div />
        <Cell icon="transp" div />
        <Cell icon="cycle" div />
        <Cell icon="osnap3d" drop />
      </Group>
      <Group className="w-[104px]"><Cell icon="ducs" /><Cell icon="filter" drop /><Cell icon="gizmoSm" drop /></Group>
      <Group className="w-[147px]">
        <Cell icon="anno1" /><Cell icon="anno2" /><Cell icon="anno3" />
        <button type="button" className="flex flex-1 items-center justify-end gap-1 pr-1 whitespace-nowrap">1:1 / 100%<Caret big /></button>
      </Group>
      <Group className="w-[66px]"><Cell icon="cog" drop div /><Cell icon="plus" /></Group>
      <Group className="w-[124px]">
        <Cell icon="ruler" />
        <button type="button" className="flex h-full flex-1 items-center justify-between border-r border-[#7b7b7b] pr-1 pl-[5px]">Decimal<Caret big /></button>
        <Cell icon="calc" />
      </Group>
      <Group><Cell icon="perf" /></Group>
      <Group className="w-[51px]"><Cell icon="files" /><Cell icon="isolate" /></Group>
      <Group className="w-[50px]"><Cell icon="clean" /><Cell icon="menu" /></Group>
    </footer>
  );
}

/* ---------- taskbar ---------- */

const chrome = (
  <Svg s={22} vb={22}>
    <g stroke="none">
      <circle cx="11" cy="11" r="11" fill="#db4437" />
      <path d="M1.5 5.5L6.5 14l4.5 3-2 5A11 11 0 0 1 1.5 5.5z" fill="#0f9d58" />
      <path d="M11 6h10a11 11 0 0 1-12 16l6-9z" fill="#ffcd40" />
      <circle cx="11" cy="11" r="5" fill="#f1f1f1" /><circle cx="11" cy="11" r="4" fill="#4285f4" />
    </g>
  </Svg>
);
const saw = (
  <Svg s={24} vb={24}>
    <path d="M8 1h13v21H8z" fill="#f00" stroke="#a00" /><path d="M8 1H6v7" stroke="#888" />
    <circle cx="10" cy="15.5" r="7.5" fill="#ff0" stroke="#998c00" strokeDasharray="2 1" /><path d="M5 12l4 3M10 16l3 4M12 11l-2 4" stroke="#b5b070" />
  </Svg>
);

const apps: { label: string; art: ReactNode; open?: boolean; active?: boolean }[] = [
  { label: "Chrome", art: chrome },
  { label: "Edge", art: <Svg s={22} vb={22}><path d="M1 11C2 4 7 1 12 1c6 0 9 5 9 10v2H8c0 6 8 6 12 3v4c-6 4-17 2-17-7 0-4 3-7 6-8-4 1-6 3-8 6zM8 9h7c0-5-7-5-7 0z" fill="#0078d7" stroke="none" /></Svg> },
  { label: "File Explorer", art: <Svg s={22} vb={22}><path d="M1 3h7l2 2h11v15H1z" fill="#f5d67b" stroke="none" /><path d="M1 8h20v12H1z" fill="#fbe7a6" stroke="none" /><path d="M4 13h14v8h-4v-4H8v4H4z" fill="#3fb1e0" stroke="none" /></Svg>, open: true },
  { label: "Store", art: <Svg s={24} vb={24}><path d="M8 7V3c0-3 8-3 8 0v4" stroke="#fff" strokeWidth="1.5" /><path d="M1 6h22v15l-2 2H3l-2-2z" fill="#fff" stroke="none" /><path d="M7 9h5v5H7z" fill="#f25022" stroke="none" /><path d="M13 9h5v5h-5z" fill="#7fba00" stroke="none" /><path d="M7 15h5v5H7z" fill="#00a4ef" stroke="none" /><path d="M13 15h5v5h-5z" fill="#ffb900" stroke="none" /></Svg> },
  { label: "Outlook", art: <Svg s={22} vb={22}><path d="M1 1h20v20H1z" fill="#f6c544" stroke="#fbe7a6" /><path d="M1 16l20 1v4H1z" fill="#fdf3d2" stroke="none" /><ellipse cx="8" cy="9" rx="4" ry="5" stroke="#b8641a" strokeWidth="3" fill="#f6c544" /><circle cx="17" cy="9" r="3.5" fill="#fff" stroke="#c98a2a" /><path d="M17 7v2h2" stroke="#555" /></Svg> },
  { label: "Chrome window", art: chrome, open: true },
  { label: "Cutting", art: saw, open: true },
  { label: "SketchUp", art: <Svg s={22} vb={22}><path d="M1 3l12-2 8 5-1 12-9 4-7-4z" fill="#d9232e" stroke="none" /><path d="M3 4l9-2 6 3-8 3 5 2-5 3-5-2M6 14l6 3 5-4" stroke="#fff" strokeWidth="2" /></Svg>, open: true },
  { label: "AutoCAD", art: <Svg s={24} vb={24}><path d="M0 0h24v24H0z" fill="#e6dfe0" stroke="none" /><path d="M12 3l7 14-4 2-2-4h-3l-2 4-4-2z" fill="#b5121b" stroke="none" /><path d="M12 3l-2 9-2 7-4-2z" fill="#dc3a3f" stroke="none" /></Svg>, open: true, active: true },
  { label: "Excel", art: <Svg s={22} vb={22}><path d="M1 1h20v20H1z" fill="#4da35a" stroke="#d6efd9" /><path d="M9 3h11v9H9z" fill="#cfe9d2" stroke="none" /><path d="M4 5l8 11M12 5L4 16" stroke="#fff" strokeWidth="4" /><path d="M4 5l8 11M12 5L4 16" stroke="#1d7a34" strokeWidth="2" /><path d="M12 13h9v6h-8z" fill="#fff" stroke="#4da35a" /></Svg>, open: true },
  { label: "Cutting 2", art: saw, open: true },
];

const tray: [string, ReactNode][] = [
  ["Autodesk", <><path d="M7 2L1 14h4l4-8z" fill="#7cc242" stroke="none" /><path d="M7 2h4l4 12h-4L8 6z" fill="#1a8fd8" stroke="none" /></>],
  ["Avast", <><path d="M3 2l5 2 6-3-1 6 2 5-5-1-6 4 0-6-3-3z" fill="#ff7b16" stroke="#ff7b16" /><circle cx="8" cy="8" r="2" stroke="#fff" /></>],
  ["Defender", <><path d="M1 2l7-1 6 1v6c0 4-3 5-6 7-4-2-7-4-7-7z" fill="#fff" stroke="none" /><path d="M8 1v13M1 7h13" stroke="#000" /><circle cx="12" cy="12" r="4" fill="#d32f2f" stroke="none" /><path d="M10 10l4 4M14 10l-4 4" stroke="#fff" /></>],
  ["Dropbox", <path d="M5 2l3 2-3 2-4-2zM11 2l4 2-4 2-3-2zM5 7l3 2-3 2-4-2zM11 7l4 2-4 2-3-2zM8 11l3 2-3 2-3-2z" fill="#fff" stroke="none" />],
  ["Java", <><path d="M0 0h16v16H0z" fill="#e8791c" stroke="#f6b06a" /><path d="M8 2c2 2-2 3 0 6M4 9h7v2H5M4 13h8M12 9c3 0 1 2-1 2" stroke="#fff" /></>],
  ["Security", <><path d="M8 1l7 2c0 6-1 9-7 12C2 12 1 9 1 3z" fill="#e53935" stroke="#fbc" /><path d="M9 4L5 9h3l-1 4 4-5H8z" fill="#fff" stroke="none" /></>],
  ["Display", <><path d="M1 1h14v11H1z" fill="#8a8f9c" stroke="#36407a" /><path d="M1 14h6M9 14h6" stroke="#aaa" strokeWidth="2" /></>],
  ["CC", <><path d="M0 0h16v16H0z" fill="#d84a1c" stroke="#f6c06a" /><path d="M5 5H2v5h3M10 5H7v5h3M11 5v3h4M14 5v6" stroke="#fff" strokeWidth="1.5" /></>],
  ["Archive", <><path d="M0 0h16v16H0z" fill="#9a9a9a" stroke="none" /><path d="M2 5l6-3 6 3-1 6-5 3-5-3z" fill="#eee" stroke="#222" /><path d="M3 6l5 3 5-3" stroke="#222" /></>],
  ["S", <><path d="M0 0h16v16H0z" fill="#1f4fe0" stroke="none" /><path d="M13 2c-6 0-4 4-3 6 1 5-4 6-7 4" stroke="#fff" strokeWidth="2" /></>],
  ["Audio", <><path d="M2 1h12v14H2z" fill="#333" stroke="#bbb" /><path d="M2 2h12" stroke="#d33" strokeWidth="2" /><circle cx="8" cy="9" r="3" stroke="#eee" /></>],
  ["Bluetooth", <><ellipse cx="8" cy="8" rx="5" ry="7.5" fill="#0b5cad" stroke="none" /><path d="M5 5l6 6-3 3V2l3 3-6 6" stroke="#fff" /></>],
  ["Battery", <><path d="M4 5h11v7H4z" stroke="#fff" /><path d="M7 7h6v3H7z" fill="#fff" stroke="none" /><path d="M0 3h4v3H0zM2 6v4h2" stroke="#fff" fill="#010307" /></>],
  ["Network", <><path d="M2 14A13 13 0 0 1 14 2M5 14a10 10 0 0 1 9-8M9 14a6 6 0 0 1 5-4" stroke="#ccc" /><circle cx="13" cy="13" r="1" fill="#fff" /></>],
  ["Volume", <><path d="M1 6h3l4-4v12l-4-4H1z" stroke="#fff" /><path d="M10 5c2 2 2 4 0 6M12 3c3 3 3 7 0 10" stroke="#ddd" /></>],
];

function Taskbar() {
  return (
    <div className="flex h-10 shrink-0 items-stretch bg-[#010307] text-white">
      <button type="button" aria-label="Start" className="flex w-12 items-center justify-center">
        <Svg s={16} vb={16}><path d="M0 2l7-1v6.5H0zM8 1l8-1v7.5H8zM0 8.5h7V15l-7-1zM8 8.5h8V16l-8-1z" fill="#fff" stroke="none" /></Svg>
      </button>
      <button type="button" aria-label="Search" className="flex w-12 items-center justify-center">
        <Svg s={16} vb={16}><circle cx="10" cy="6" r="5" stroke="#fff" strokeWidth="1.5" /><path d="M6.5 9.5L1 15.5" stroke="#fff" strokeWidth="1.5" /></Svg>
      </button>
      <button type="button" aria-label="Task view" className="mr-[3px] flex w-12 items-center justify-center">
        <Svg s={20} vb={20}><path d="M4.5 3.5h11v13h-11zM3 5.5H.5v9H3M17 5.5h2.5v9H17" stroke="#fff" /></Svg>
      </button>
      {apps.map((a) => (
        <button
          key={a.label}
          type="button"
          aria-label={a.label}
          className={clsx("mr-px flex w-12 flex-col items-center", a.active && "bg-[#33373b]")}
        >
          <span className="flex flex-1 items-center">{a.art}</span>
          {a.open && <span className={clsx("-mt-[2px] h-[2px] bg-[#a3cdf5]", a.active ? "w-12" : "w-10")} />}
        </button>
      ))}
      <div className="ml-auto flex items-center">
        {tray.map(([label, art]) => (
          <button key={label} type="button" aria-label={label} className="flex w-6 justify-center">
            <Svg s={16} vb={16}>{art}</Svg>
          </button>
        ))}
        <button type="button" className="ml-[6px]">ENG</button>
        <button type="button" className="ml-1 w-[78px] text-center leading-[18px] whitespace-nowrap">
          13:09
          <br />
          7.12.2017 г.
        </button>
        <button type="button" aria-label="Notifications" className="mr-6 ml-[6px]">
          <Svg s={18}><path d="M1 1h16v12H9l-4 4v-4H1z" fill="#fff" stroke="none" /><path d="M4 4.5h10M4 7.5h10M4 10.5h5" stroke="#111" /><circle cx="14" cy="13" r="3.5" fill="#111" stroke="#ccc" /><path d="M12 15l4-4" /></Svg>
        </button>
      </div>
    </div>
  );
}

export default function App() {
  return (
    <div className="flex min-h-screen flex-col bg-[#e3e3e4] font-['Open_Sans','Noto_Sans',sans-serif] text-[12px] leading-[16px]">
      <div className="h-[3px] border-b border-[#9a9a9a] bg-[#ececec]" />
      <div className="flex flex-1">
        {/* the windows behind */}
        <div className="flex w-[10px] shrink-0 flex-col border-r border-[#9b9b9b] bg-[#f8f8f8]">
          <div className="mb-1 ml-[2px] h-4 bg-[#f5dc83]" />
          <div className="h-[23px] bg-[#1673c9]" />
          <div className="h-[93px] border-b border-[#d0d0d0] bg-[#eef1f6]" />
          <div className="mt-[219px] h-6 bg-[#cfcfcf]" />
        </div>
        <div className="flex min-w-0 flex-1 flex-col">
          <div className="h-[7px] bg-white" />
          <Header />
          <Ribbon />
          <FileTabs />
          <Viewport />
          <StatusBar />
        </div>
        <div className="flex w-[10px] shrink-0 border-l border-[#8f8f8f] bg-[#d6d6d6]">
          <div className="ml-[4px] flex-1 border-l border-[#9f9f9f] bg-[#dfdfdf]" />
        </div>
      </div>
      <div className="ml-[17px] h-[7px] border-b border-[#8b8b8b] bg-linear-to-b from-[#aaa] to-[#e8e8e8]" />
      <Taskbar />
    </div>
  );
}
